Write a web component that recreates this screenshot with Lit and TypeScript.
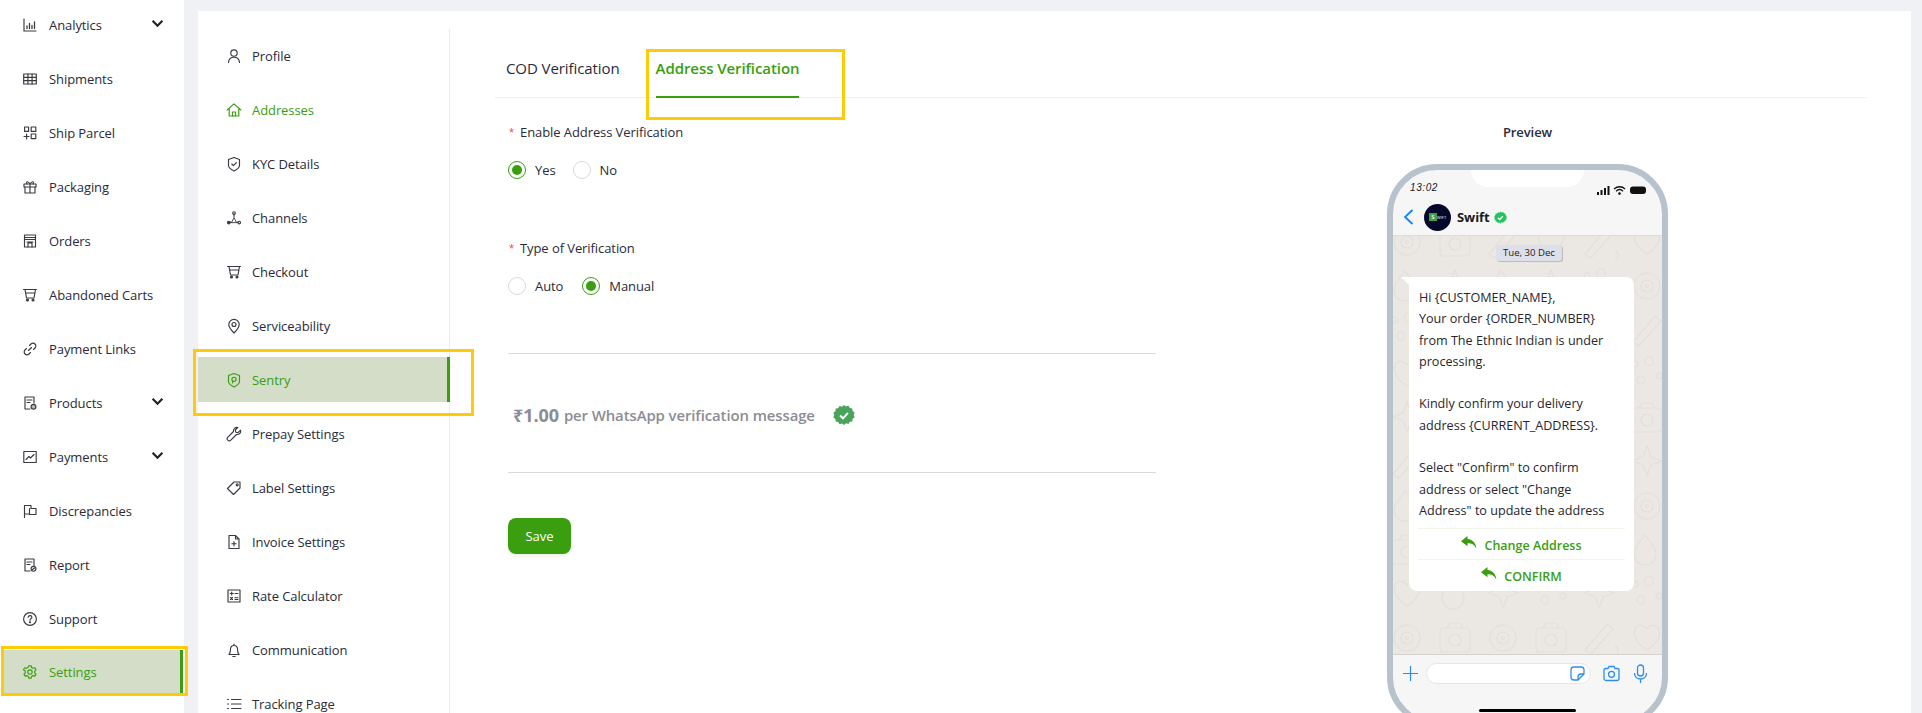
import { LitElement, html, css, svg } from "lit";
import { customElement } from "lit/decorators.js";

const ic = (body: any) => html`<svg class="ic" viewBox="0 0 16 16" fill="none" stroke="currentColor" stroke-width="1.150" stroke-linecap="round" stroke-linejoin="round">${body}</svg>`;

const icons: Record<string, any> = {
  analytics: svg`<path d="M2 2v12h12"/><path d="M5 11.500V9M7.500 11.500V6.500M10 11.500V8.500M12.500 11.500V5" stroke-width="1.300"/>`,
  table: svg`<rect x="1.700" y="3" width="12.600" height="10"/><path d="M1.700 6.300h12.600M1.700 9.600h12.600M5.900 3v10M10.100 3v10"/>`,
  parcel: svg`<rect x="2.600" y="2" width="4" height="4.400"/><rect x="9.200" y="2" width="4.600" height="4.400"/><rect x="9.200" y="9" width="4.600" height="4.600"/><path d="M4.600 9v5M2 11.500h5"/>`,
  gift: svg`<rect x="2" y="5" width="12" height="3"/><path d="M3 8v6h10V8M8 5v9M8 5C6 1.500 3.500 2.500 5 5M8 5c2-3.500 4.500-2.500 3 0"/>`,
  store: svg`<path d="M2.500 2h11v12h-11zM2.500 6.500h11M2.500 4.500h11"/><path d="M6 14v-4h4v4M5 9h6"/>`,
  cart: svg`<path d="M1.500 2.500h13M3 2.500 4.500 11h7.500L13.500 2.500M3.500 6h9.500"/><circle cx="5.500" cy="13" r="1" fill="currentColor"/><circle cx="11" cy="13" r="1" fill="currentColor"/>`,
  link: svg`<path d="M6.500 9.500 9.500 6.500"/><path d="M7.500 4.500l1.500-1.500a2.800 2.800 0 0 1 4 4L11.500 8.500"/><path d="M8.500 11.500 7 13a2.800 2.800 0 0 1-4-4l1.500-1.500"/>`,
  product: svg`<path d="M8 14H3V2h9v6"/><path d="M5 5h5M5 7.500h3"/><circle cx="11.500" cy="11.800" r="2.400" fill="currentColor" fill-opacity=".35"/>`,
  payment: svg`<rect x="1.800" y="2.500" width="12.400" height="11"/><path d="M4 10.500 7 7.500l1.500 1.500 3.500-3.500"/>`,
  flag: svg`<path d="M2.500 14.500V2.500h6.500v3h5v6H7.500v-6M2.500 11H7.500"/>`,
  report: svg`<path d="M8 14H3V2h9v6.500"/><path d="M5 5h5M5 7.500h3"/><circle cx="11.500" cy="11.800" r="2.400"/><path d="M10.500 12.500l2-1.500"/>`,
  help: svg`<circle cx="8" cy="8" r="6.400"/><path d="M6.200 6.300c.2-2.300 3.700-2.200 3.700 0 0 1.500-1.900 1.500-1.900 3"/><circle cx="8" cy="11.200" r=".5" fill="currentColor"/>`,
  gear: svg`<circle cx="8" cy="8" r="2.200"/><path d="M6.800 1.800h2.400l.4 1.700 1.500.8 1.700-.5 1.200 2-1.300 1.300v1.700l1.300 1.300-1.200 2-1.700-.5-1.500.8-.4 1.700H6.800l-.4-1.700-1.500-.8-1.700.5-1.200-2 1.300-1.300V7.100L1.500 5.800l1.200-2 1.700.5 1.500-.8z"/>`,
  user: svg`<circle cx="8" cy="5" r="3.200"/><path d="M2.500 14.500c.4-7 10.600-7 11 0"/>`,
  home: svg`<path d="M1.200 8 8 1.800 14.800 8M3.200 6.500V14h9.600V6.500"/><path d="M6.500 14v-4h3v4"/>`,
  shield: svg`<path d="M8 1.500 13.500 3.500v6C13.500 12 10.500 13.800 8 15c-2.500-1.200-5.500-3-5.500-5.500v-6z"/><path d="M5.800 8l1.600 1.600 3-3"/>`,
  nodes: svg`<circle cx="8" cy="3" r="1.300"/><circle cx="2.800" cy="12.500" r="1.300" fill="currentColor"/><circle cx="13.200" cy="12.500" r="1.300"/><path d="M8 4.300v2.200M4.100 12.300h1.400M11.900 12.300h-1.400"/><path d="M5.700 12.300 8 7.500l2.300 4.800z" stroke-width=".9"/>`,
  pin: svg`<path d="M8 15C5 12 2.800 9.500 2.800 6.500a5.200 5.200 0 0 1 10.400 0C13.200 9.500 11 12 8 15z"/><circle cx="8" cy="6.500" r="2"/>`,
  sentry: svg`<path d="M8 1.500 13.500 3.500v6C13.500 12 10.500 13.800 8 15c-2.500-1.200-5.500-3-5.500-5.500v-6z"/><circle cx="8" cy="7.300" r="2.100"/><path d="M7 9.300 6.500 11"/>`,
  wrench: svg`<path d="M14.500 4.200 12 6.700 9.800 6.200 9.300 4 11.800 1.500C9.500.8 7.200 2.500 7.500 5.500L1.800 11.200a2 2 0 0 0 3 3L10.500 8.500c3 .3 4.700-2 4-4.300z"/>`,
  tag: svg`<path d="M1.500 8.500 8 2h6v6l-6.500 6.500z"/><circle cx="11.200" cy="4.800" r="1"/>`,
  invoice: svg`<path d="M9.500 1.500H3v13h10V5zM9.500 1.500V5H13"/><path d="M8 7.500v4.500M5.800 9.700h4.400"/>`,
  calc: svg`<rect x="2" y="2" width="12" height="12"/><path d="M4.200 5.500h3M5.700 4v3M9 5.500h3M4.500 9.500l2 2M6.500 9.500l-2 2M9 9.700h3M9 11.500h3"/>`,
  bell: svg`<path d="M3 12.500h10c-1-1-1.400-2-1.400-4.500 0-2.500-1.500-4.500-3.600-4.500S4.400 5.500 4.400 8c0 2.500-.4 3.500-1.400 4.500zM8 3.500V2M6.800 14.500h2.400"/>`,
  list: svg`<path d="M5.500 3.500H15M5.500 8H15M5.500 12.500H15M1.500 3.500h1M1.500 8h1M1.500 12.500h1"/>`,
};

const mainNav = [
  ["Analytics", "analytics", 1], ["Shipments", "table", 0], ["Ship Parcel", "parcel", 0], ["Packaging", "gift", 0],
  ["Orders", "store", 0], ["Abandoned Carts", "cart", 0], ["Payment Links", "link", 0], ["Products", "product", 1],
  ["Payments", "payment", 1], ["Discrepancies", "flag", 0], ["Report", "report", 0], ["Support", "help", 0], ["Settings", "gear", 0],
] as const;

const subNav = [
  ["Profile", "user"], ["Addresses", "home"], ["KYC Details", "shield"], ["Channels", "nodes"], ["Checkout", "cart"],
  ["Serviceability", "pin"], ["Sentry", "sentry"], ["Prepay Settings", "wrench"], ["Label Settings", "tag"],
  ["Invoice Settings", "invoice"], ["Rate Calculator", "calc"], ["Communication", "bell"], ["Tracking Page", "list"],
] as const;

const reply = html`<svg class="reply" viewBox="0 0 16 13"><path fill="currentColor" d="M6.500 0 0 5.200l6.500 5V7.200c4 0 6.800 1.200 8.800 5.300C15 7.500 12 3.600 6.500 3z"/></svg>`;

const SEAL = "M11 1l2 1.600 2.500-.8 1.300 2.200 2.500.4.300 2.600 2.100 1.500-1 2.400 1 2.400-2.100 1.500-.3 2.600-2.500.4-1.300 2.200-2.500-.8L11 21l-2-1.600-2.500.8-1.300-2.200-2.500-.4-.3-2.600L.3 13.500l1-2.400-1-2.400 2.100-1.500.3-2.600 2.500-.4L6.500 2l2.500.8z";

@customElement("app-root")
export class AppRoot extends LitElement {
  static styles = css`
    :host { display: block; width: 1922px; height: 713px; overflow: hidden; background: #eff1f5; position: relative;
      font-family: "Open Sans", "Noto Sans", sans-serif; font-size: 13px; letter-spacing: -.08px; color: #2a2a3a; }
    * { box-sizing: border-box; }
    .page { display: flex; height: 713px; }
    .side { width: 184px; flex: none; background: #fff; height: 713px; overflow: hidden; }
    .side a { display: flex; align-items: center; height: 54px; padding-left: 22px; gap: 11px; position: relative; }
    .side a:first-child { margin-top: -2px; }
    .ic { width: 16px; height: 16px; flex: none; color: #3a3a42; }
    .chev { position: absolute; left: 151px; top: 19px; width: 13px; height: 13px; color: #222; }
    a.on { color: #3a9e0f; }
    a.on .ic { color: #3a9e0f; }
    .side a.cur { background: #d3ddc8; height: 43px; margin: 4px 1px 7px 3px; padding-left: 19px; border-right: 3px solid #3a9e0f; }
    .panel { margin: 11px 11px 0 14px; flex: 1; background: #fff; display: flex; min-width: 0; height: 702px; }
    .sub { width: 252px; flex: none; margin-top: 18px; border-right: 1px solid #eaecef; height: 684px; }
    .sub a { display: flex; align-items: center; height: 54px; padding-left: 28px; gap: 10px; }
    .sub a.cur { background: #d3ddc8; height: 45px; margin: 4px -1px 5px 0; border-right: 3px solid #3a9e0f; }
    .main { flex: 1; padding: 0 45px; min-width: 0; }
    .tabs { display: flex; height: 87px; border-bottom: 1px solid #eeeff1; font-size: 15px; gap: 36px; padding-left: 11px; }
    .tab { height: 87px; padding-top: 46px; line-height: 22px; color: #2a2a3a; }
    .tab.on { color: #3a9e0f; font-weight: 600; border-bottom: 2px solid #3a9e0f; }
    .body { display: flex; }
    .form { width: 648px; margin-left: 13px; flex: none; }
    .lab { height: 20px; line-height: 20px; margin-top: 24px; }
    .lab i { color: #ff4d4f; font-style: normal; font-family: "Liberation Sans", sans-serif; margin-right: 6px; margin-left: 1px; }
    .radios { display: flex; align-items: center; height: 18px; margin-top: 19px; }
    .r { width: 18px; height: 18px; border-radius: 50%; border: 1px solid #d9d9d9; flex: none; margin-right: 9px; }
    .r.c { border-color: #3a9e0f; display: flex; align-items: center; justify-content: center; }
    .r.c::after { content: ""; width: 10px; height: 10px; background: #3a9e0f; border-radius: 50%; }
    .rl { margin-right: 17px; }
    .rl.w { margin-right: 19px; }
    .g2 { margin-top: 59px; }
    .hr { height: 1px; background: #d9d9d9; }
    .hr.a { margin-top: 58px; }
    .price { height: 118px; display: flex; align-items: center; padding: 3px 0 0 5px; color: #8c8c94; font-weight: 600; font-size: 14.900px; }
    .price b { font-size: 18px; font-weight: 700; margin-right: 5px; }
    .seal { width: 22px; height: 22px; margin-left: 18px; }
    .save { display: block; margin-top: 45px; width: 63px; height: 36px; border-radius: 8px; background: #3a9e0f; border: 0; color: #fff; font: inherit; box-shadow: 0 2px 4px rgba(0,0,0,.08); }
    .prev { flex: 1; display: flex; flex-direction: column; align-items: center; padding-left: 33px; }
    .prev h4 { margin: 24px 0 0; font-size: 13px; font-weight: 600; line-height: 20px; height: 20px; }
    .phone { margin-top: 22px; width: 281px; height: 563px; border: 6px solid #b6c2cc; border-radius: 50px; background: #f6f6f6; position: relative; overflow: hidden; flex: none; }
    .notch { position: absolute; left: 78px; top: 0; width: 113px; height: 17px; background: #fff; border-radius: 0 0 22px 22px; }
    .status { height: 28px; display: flex; justify-content: space-between; align-items: flex-end; padding: 0 15px 5px 17px; font-size: 10px; font-style: italic; font-family: "Liberation Sans", sans-serif; letter-spacing: .6px; color: #222; }
    .status svg { display: block; width: 50px; height: 10px; margin-bottom: -2px; }
    .chat-h { height: 38px; display: flex; align-items: center; padding-left: 10px; font-weight: 700; font-size: 13px; color: #1a1a22; }
    .chat-h .back { width: 11px; height: 16px; color: #0a84ff; margin-right: 10px; }
    .avatar { width: 27px; height: 27px; border-radius: 50%; background: #06082a; display: flex; align-items: center; justify-content: center; margin-right: 6px; font-size: 4px; font-weight: 600; letter-spacing: 0; color: #cfd2da; }
    .avatar i { width: 8px; height: 8px; background: #3f9e4d; color: #fff; font-style: normal; font-size: 6px; line-height: 8px; text-align: center; }
    .vb { width: 13px; height: 13px; margin-left: 4px; }
    .chat { position: absolute; left: 0; right: 0; top: 65px; height: 420px; background: #ebe7e2; border-top: 1px solid #dedcd8; border-bottom: 1px solid #d5d2ce; overflow: hidden; }
    .doodle { position: absolute; inset: 0; width: 100%; height: 100%; }
    .date { position: absolute; left: 103px; top: 9px; width: 66px; height: 16px; line-height: 16px; text-align: center; font-size: 9.600px; letter-spacing: 0; background: #dde0ea; border-radius: 3px; box-shadow: 1px 1px 0 #bbb; color: #222; white-space: nowrap; }
    .bubble-tail { position: absolute; left: 8px; top: 41px; border-top: 8px solid #fff; border-left: 8px solid transparent; }
    .bubble { position: absolute; left: 16px; top: 41px; width: 225px; height: 314px; background: #fff; border-radius: 0 8px 8px 8px; padding: 10px 10px 0; font-size: 12.600px; line-height: 21.300px; letter-spacing: 0; color: #26262e; }
    .msg { height: 241px; white-space: nowrap; }
    .act { height: 31px; margin: 0 -1px; padding-top: 3px; border-top: 1px solid #f0f7ea; display: flex; align-items: center; justify-content: center; gap: 7px; color: #3a9e0f; font-weight: 600; font-size: 12.500px; }
    .reply { width: 16px; height: 13px; margin-top: -6px; }
    .bar { position: absolute; left: 0; right: 0; top: 485px; height: 63px; display: flex; align-items: flex-start; padding: 8px 0 0 10px; color: #2f8bf0; }
    .plus { width: 15px; height: 15px; margin-top: 3px; }
    .input { width: 165px; height: 21px; background: #fff; border: 1px solid #e4e6e8; border-radius: 11px; margin-left: 8px; display: flex; justify-content: flex-end; align-items: center; padding-right: 5px; flex: none; }
    .input svg { width: 15px; height: 15px; }
    .cam { width: 17px; height: 17px; margin: 2px 0 0 12px; }
    .mic { width: 15px; height: 19px; margin: 1px 0 0 13px; }
    .home-i { position: absolute; left: 86px; bottom: 9px; width: 97px; height: 3px; background: #000; border-radius: 2px; }
    .hl { position: absolute; border: 3px solid #ffcb05; pointer-events: none; }
    .hl1 { left: 1px; top: 646px; width: 187px; height: 50px; }
    .hl2 { left: 193px; top: 349px; width: 281px; height: 67px; }
    .hl3 { left: 646px; top: 49px; width: 199px; height: 71px; }
  `;

  private doodles() {
    const shapes = [
      (x: number, y: number) => svg`<circle cx=${x + 18} cy=${y + 18} r="13"/><circle cx=${x + 18} cy=${y + 18} r="6"/><circle cx=${x + 18} cy=${y + 18} r="1.500"/>`,
      (x: number, y: number) => svg`<path d="M${x + 18} ${y + 2}l4 11 11 4-11 4-4 11-4-11-11-4 11-4z"/>`,
      (x: number, y: number) => svg`<path d="M${x + 18} ${y + 30}C${x - 6} ${y + 14} ${x + 10} ${y - 2} ${x + 18} ${y + 9}C${x + 26} ${y - 2} ${x + 42} ${y + 14} ${x + 18} ${y + 30}z"/>`,
      (x: number, y: number) => svg`<rect x=${x + 3} y=${y + 8} width="30" height="24" rx="4"/><circle cx=${x + 18} cy=${y + 20} r="6"/><path d="M${x + 10} ${y + 8}l3-5h10l3 5"/>`,
      (x: number, y: number) => svg`<circle cx=${x + 6} cy=${y + 8} r="3"/><circle cx=${x + 20} cy=${y + 5} r="4.500"/><circle cx=${x + 12} cy=${y + 24} r="4"/><circle cx=${x + 30} cy=${y + 20} r="3"/>`,
      (x: number, y: number) => svg`<path d="M${x + 16} ${y + 3}c8 10 11 14 11 19a11 11 0 0 1-22 0c0-5 3-9 11-19z"/>`,
      (x: number, y: number) => svg`<path d="M${x + 4} ${y + 30}L${x + 26} ${y + 4}l6 5L${x + 10} ${y + 34}zM${x + 34} ${y + 26}c4 2 4 8 0 10"/>`,
    ];
    const cells = [];
    let n = 0;
    for (let y = -12; y < 430; y += 44) {
      for (let x = (y % 88 === 0 ? -24 : -4); x < 280; x += 48) {
        cells.push(shapes[(n * 3 + (n >> 2)) % shapes.length](x, y));
        n++;
      }
    }
    return svg`<svg class="doodle" fill="none" stroke="#e3dfd9" stroke-width="1.200">${cells}</svg>`;
  }

  render() {
    return html`
      <div class="page">
        <nav class="side">
          ${mainNav.map(([t, i, c]) => html`<a class=${t === "Settings" ? "on cur" : ""}>${ic(icons[i])}<span>${t}</span>
            ${c ? html`<svg class="chev" viewBox="0 0 12 12" fill="none" stroke="currentColor" stroke-width="2"><path d="M1.500 3.500 6 8l4.500-4.500"/></svg>` : ""}</a>`)}
        </nav>
        <section class="panel">
          <nav class="sub">
            ${subNav.map(([t, i]) => html`<a class=${t === "Sentry" ? "on cur" : t === "Addresses" ? "on" : ""}>${ic(icons[i])}<span>${t}</span></a>`)}
          </nav>
          <div class="main">
            <div class="tabs">
              <div class="tab">COD Verification</div>
              <div class="tab on">Address Verification</div>
            </div>
            <div class="body">
              <div class="form">
                <div class="lab"><i>*</i>Enable Address Verification</div>
                <div class="radios"><span class="r c"></span><span class="rl">Yes</span><span class="r"></span><span class="rl">No</span></div>
                <div class="lab g2"><i>*</i>Type of Verification</div>
                <div class="radios"><span class="r"></span><span class="rl w">Auto</span><span class="r c"></span><span class="rl">Manual</span></div>
                <div class="hr a"></div>
                <div class="price"><b>₹1.00</b> per WhatsApp verification message
                  <svg class="seal" viewBox="0 0 22 22"><path fill="#4aa35a" d=${SEAL}/><path fill="none" stroke="#fff" stroke-width="2" d="M7 11.500l3 2.800 5-5.500"/></svg>
                </div>
                <div class="hr"></div>
                <button class="save">Save</button>
              </div>
              <div class="prev">
                <h4>Preview</h4>
                <div class="phone">
                  <div class="notch"></div>
                  <div class="status"><span>13:02</span>
                    <svg viewBox="0 0 50 10"><path fill="#111" d="M0 7h2v3H0zM3.500 5h2v5h-2zM7 3h2v7H7zM10.500 1h2v9h-2z"/><path fill="none" stroke="#111" stroke-width="1.300" d="M17 4c3.500-3 8-3 11 0M19 6.200c2.200-2 5-2 7 0"/><circle cx="22.500" cy="8.600" r="1.300" fill="#111"/><rect x="33" y="1.500" width="16" height="7.500" rx="3" fill="#111"/></svg>
                  </div>
                  <div class="chat-h">
                    <svg class="back" viewBox="0 0 11 16" fill="none" stroke="currentColor" stroke-width="1.800"><path d="M9.500 1 2 8l7.500 7"/></svg>
                    <div class="avatar"><i>S</i>WIFT</div>
                    <span>Swift</span>
                    <svg class="vb" viewBox="0 0 22 22"><path fill="#25c35f" d=${SEAL}/><path fill="none" stroke="#fff" stroke-width="2.400" d="M6.500 11.500l3 2.800 5.500-5.500"/></svg>
                  </div>
                  <div class="chat">
                    ${this.doodles()}
                    <div class="date">Tue, 30 Dec</div>
                    <div class="bubble-tail"></div>
                    <div class="bubble">
                      <div class="msg">Hi {CUSTOMER_NAME},<br>Your order {ORDER_NUMBER}<br>from The Ethnic Indian is under<br>processing.<br><br>Kindly confirm your delivery<br>address {CURRENT_ADDRESS}.<br><br>Select "Confirm" to confirm<br>address or select "Change<br>Address" to update the address</div>
                      <div class="act">${reply}<span>Change Address</span></div>
                      <div class="act">${reply}<span>CONFIRM</span></div>
                    </div>
                  </div>
                  <div class="bar">
                    <svg class="plus" viewBox="0 0 15 15" fill="none" stroke="currentColor" stroke-width="1.200"><path d="M7.500 0v15M0 7.500h15"/></svg>
                    <div class="input"><svg viewBox="0 0 15 15" fill="none" stroke="currentColor" stroke-width="1.300"><path d="M14 8V4a3 3 0 0 0-3-3H4a3 3 0 0 0-3 3v7a3 3 0 0 0 3 3h4zM14 8H11a3 3 0 0 0-3 3v3"/></svg></div>
                    <svg class="cam" viewBox="0 0 17 17" fill="none" stroke="currentColor" stroke-width="1.300"><path d="M1 5a1.500 1.500 0 0 1 1.500-1.500H5L6 1.500h5L12 3.500h2.500A1.500 1.500 0 0 1 16 5v8.500a2 2 0 0 1-2 2H3a2 2 0 0 1-2-2z"/><circle cx="8.500" cy="9.300" r="3"/></svg>
                    <svg class="mic" viewBox="0 0 15 19" fill="none" stroke="currentColor" stroke-width="1.300"><rect x="4.500" y="1" width="6" height="11" rx="3"/><path d="M1.500 9c0 8 12 8 12 0M7.500 15.500V19"/></svg>
                  </div>
                  <div class="home-i"></div>
                </div>
              </div>
            </div>
          </div>
        </section>
      </div>
      <div class="hl hl1"></div>
      <div class="hl hl2"></div>
      <div class="hl hl3"></div>
    `;
  }
}
